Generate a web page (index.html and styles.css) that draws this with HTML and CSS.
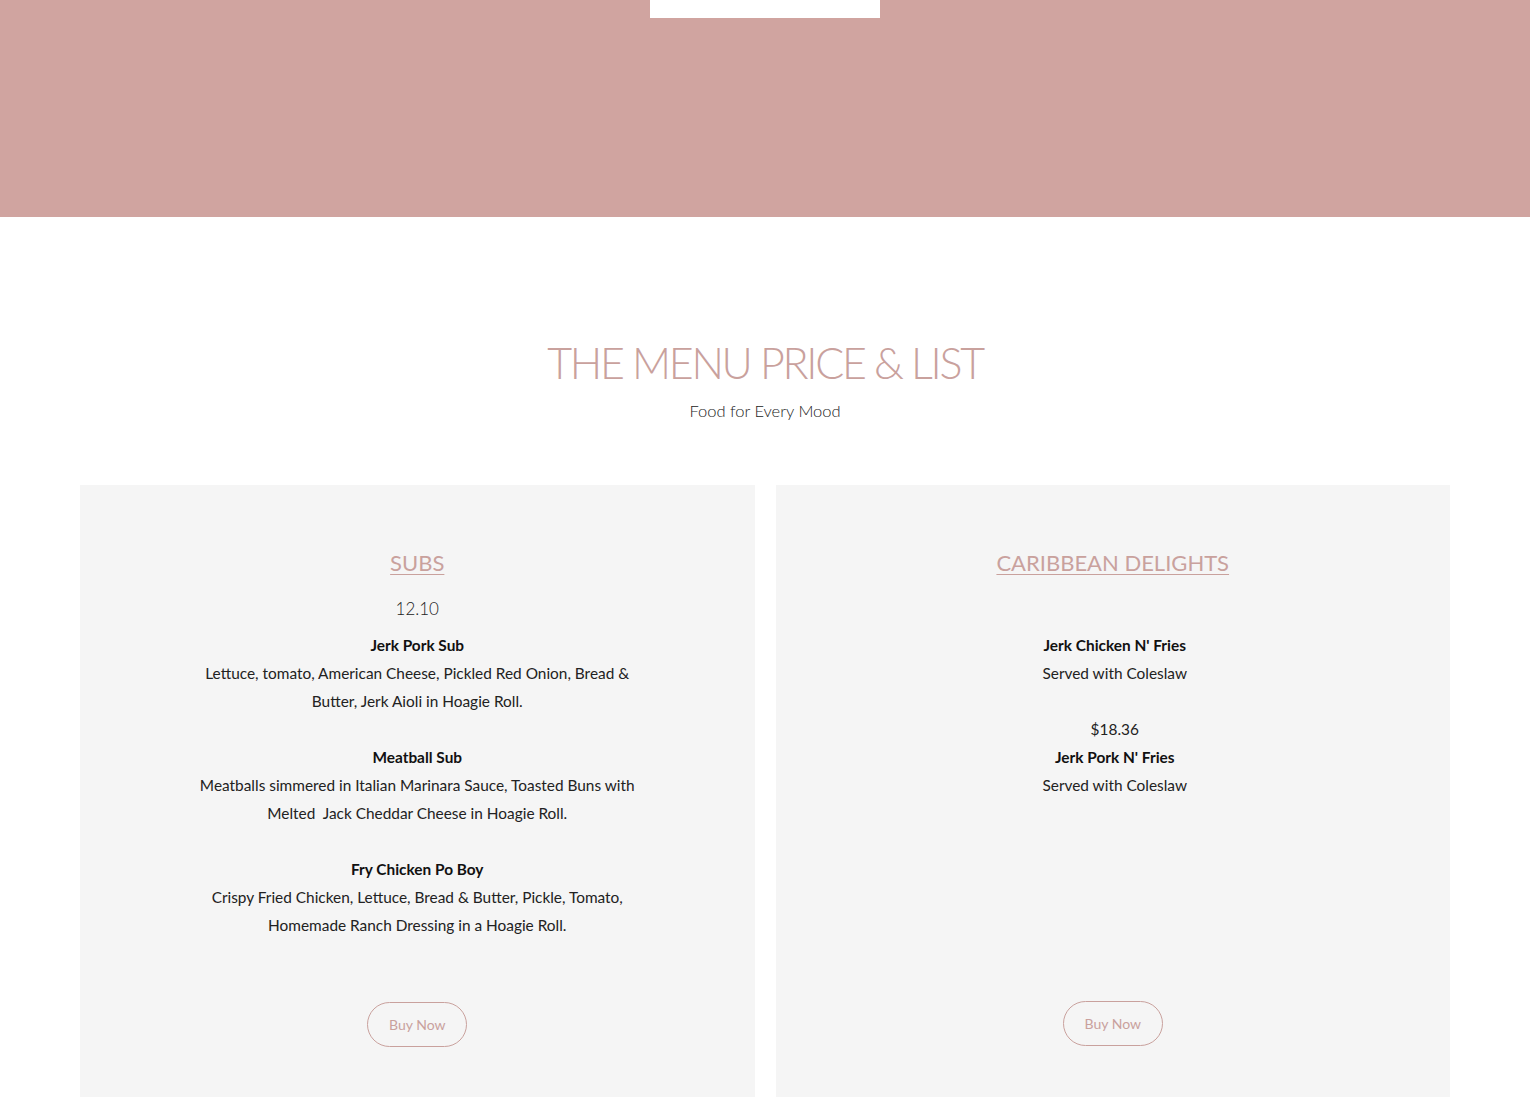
FILE: index.html
```html
<!DOCTYPE html>
<html>
<head>
<meta charset="utf-8">
<link rel="stylesheet" href="styles.css">
</head>
<body>
<header class="band">
  <div class="band-tab"></div>
</header>
<section class="menu">
  <h1 class="menu-title">THE MENU PRICE &amp; LIST</h1>
  <p class="menu-sub">Food for Every Mood</p>
  <div class="cards">
    <div class="card">
      <h2 class="card-head">SUBS</h2>
      <p class="price">12.10</p>
      <div class="items">
        <p class="item-name">Jerk Pork Sub</p>
        <p>Lettuce, tomato, American Cheese, Pickled Red Onion, Bread &amp;<br>Butter, Jerk Aioli in Hoagie Roll.</p>
        <p class="blank">&nbsp;</p>
        <p class="item-name">Meatball Sub</p>
        <p>Meatballs simmered in Italian Marinara Sauce, Toasted Buns with<br>Melted&nbsp; Jack Cheddar Cheese in Hoagie Roll.</p>
        <p class="blank">&nbsp;</p>
        <p class="item-name">Fry Chicken Po Boy</p>
        <p>Crispy Fried Chicken, Lettuce, Bread &amp; Butter, Pickle, Tomato,<br>Homemade Ranch Dressing in a Hoagie Roll.</p>
      </div>
      <button class="buy">Buy Now</button>
    </div>
    <div class="card">
      <h2 class="card-head">CARIBBEAN DELIGHTS</h2>
      <p class="price price-empty">&nbsp;</p>
      <div class="items items-right">
        <p class="item-name">Jerk Chicken N' Fries</p>
        <p>Served with Coleslaw</p>
        <p class="blank">&nbsp;</p>
        <p>$18.36</p>
        <p class="item-name">Jerk Pork N' Fries</p>
        <p>Served with Coleslaw</p>
      </div>
      <button class="buy buy-right">Buy Now</button>
    </div>
  </div>
</section>
</body>
</html>
```
FILE: styles.css
```css
* { box-sizing: border-box; }
html, body { margin: 0; padding: 0; }
body {
  background: #ffffff;
  font-family: "Lato", "Liberation Sans", sans-serif;
  color: #1a1a1a;
  overflow: hidden;
}
p { margin: 0; }

.band {
  height: 217px;
  background: #d0a4a0;
  display: flex;
  justify-content: center;
}
.band-tab {
  width: 230px;
  height: 18px;
  background: #ffffff;
}

.menu {
  display: flex;
  flex-direction: column;
  align-items: center;
  padding-top: 120px;
}
.menu-title {
  margin: 0;
  font-family: "Lato", sans-serif;
  font-weight: 300;
  font-size: 43px;
  line-height: 52px;
  letter-spacing: -2.3px;
  color: #c9a19d;
}
.menu-sub {
  margin-top: 11px;
  font-family: "Lato", sans-serif;
  font-weight: 300;
  font-size: 16.5px;
  line-height: 22px;
  color: #222;
}

.cards {
  margin-top: 63px;
  width: 1370px;
  display: grid;
  grid-template-columns: 1fr 1fr;
  gap: 21px;
}
.card {
  background: #f5f5f5;
  min-height: 620px;
  display: flex;
  flex-direction: column;
  align-items: center;
  padding-top: 64px;
  padding-bottom: 58px;
}
.card-head {
  margin: 0;
  font-family: "Lato", sans-serif;
  font-weight: 400;
  font-size: 22px;
  line-height: 28px;
  color: #c9a19d;
  text-decoration: underline;
  text-underline-offset: 3px;
  text-decoration-thickness: 1px;
}
.price {
  margin-top: 20px;
  font-weight: 300;
  font-size: 17px;
  line-height: 24px;
  color: #222;
}
.items {
  margin-top: 10px;
  text-align: center;
  font-size: 15.4px;
  line-height: 28px;
  color: #222;
}
.items-right { margin-left: 4px; }
.item-name { font-weight: 700; color: #111; }

.buy {
  margin-top: auto;
  width: 100px;
  height: 45px;
  border: 1px solid #c9a19d;
  border-radius: 23px;
  background: transparent;
  color: #c9a19d;
  font-family: "Lato", sans-serif;
  font-size: 14px;
  cursor: pointer;
}
.buy-right { margin-bottom: 1px; }
```
